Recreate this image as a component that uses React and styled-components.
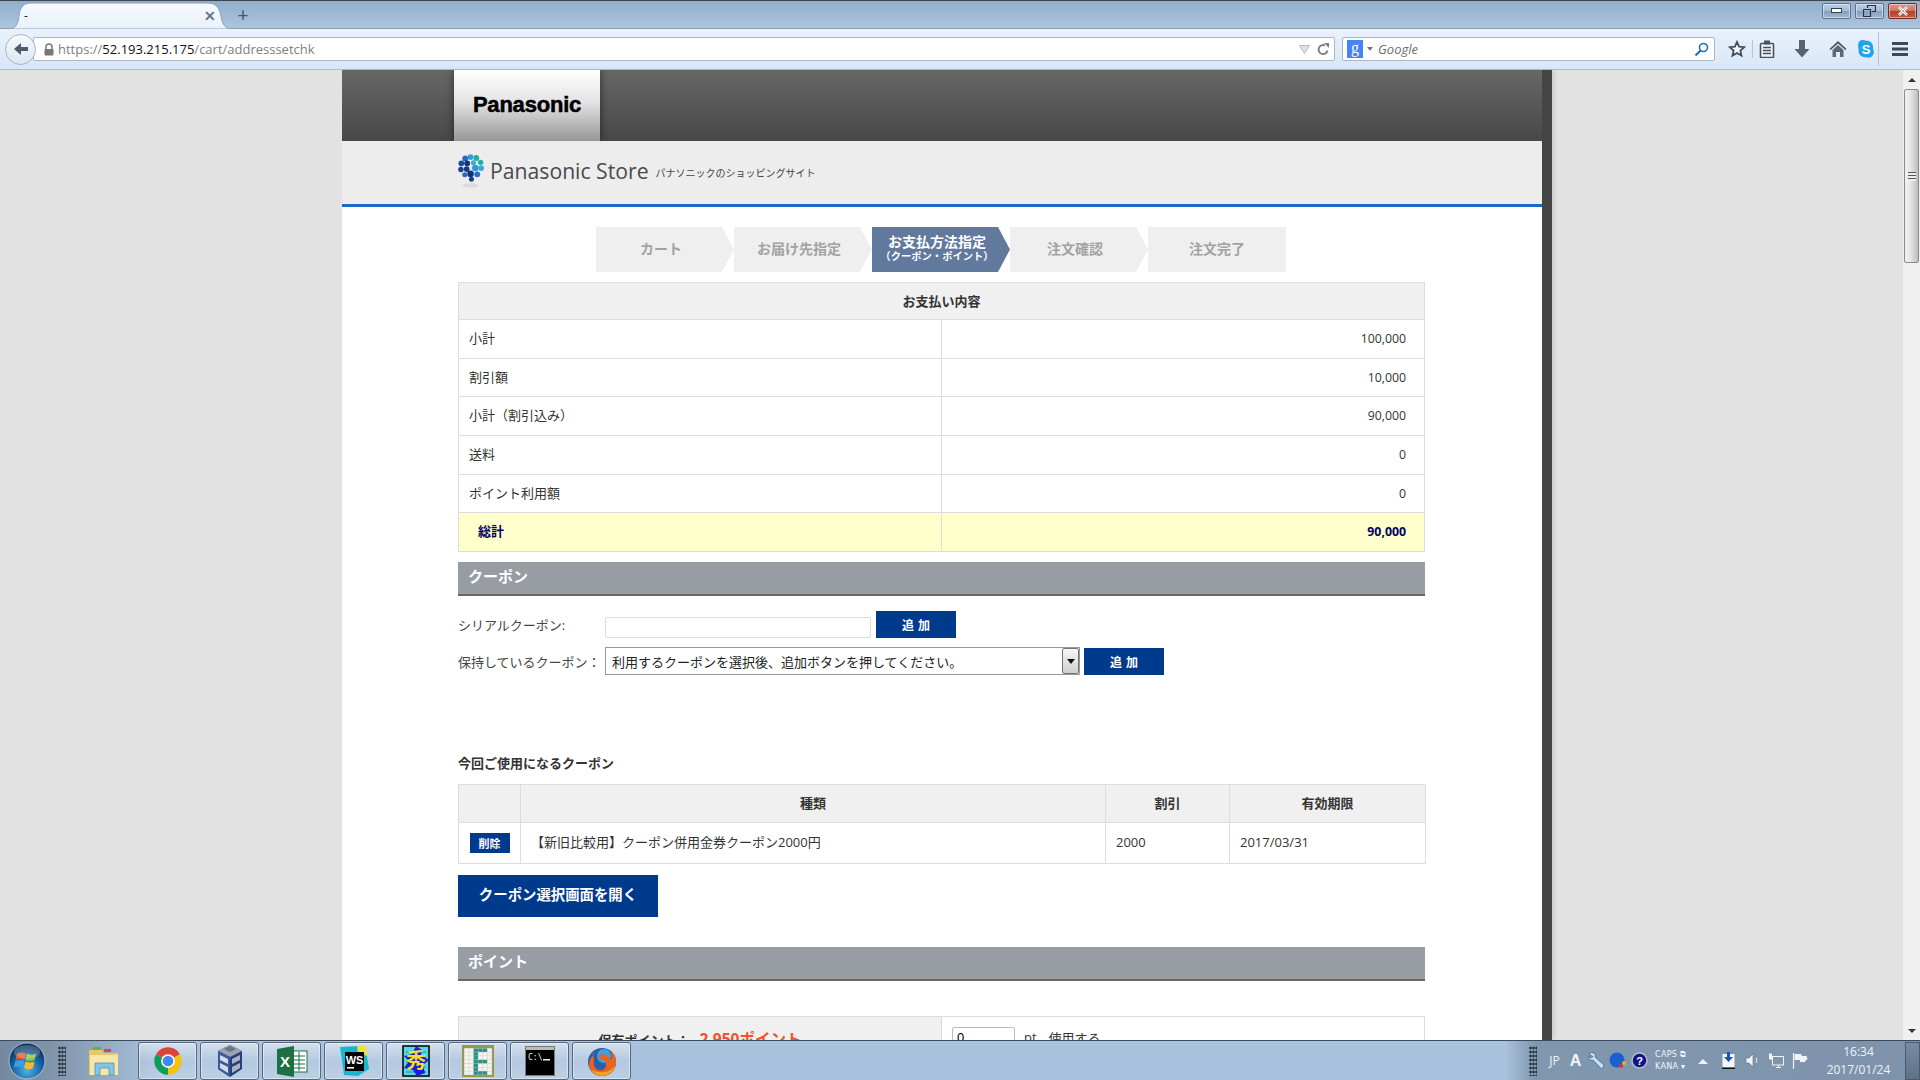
import React from 'react';
import styled, { createGlobalStyle } from 'styled-components';

const JP = `"Open Sans", "Noto Sans CJK JP", sans-serif`;

const GlobalStyle = createGlobalStyle`
  html, body {
    margin: 0;
    padding: 0;
    height: 100%;
    overflow: hidden;
    background: #e2e2e2;
    font-family: ${JP};
  }
  * {
    box-sizing: border-box;
  }
`;

const Screen = styled.div`
  width: 1920px;
  height: 1080px;
  display: flex;
  flex-direction: column;
  overflow: hidden;
`;

/* ---------- browser chrome ---------- */

const TitleBar = styled.div`
  height: 29px;
  display: flex;
  align-items: flex-end;
  padding-left: 8px;
  border-top: 1px solid #3c4450;
  border-bottom: 1px solid #8a9bb0;
  background: linear-gradient(#93aecb, #abc5df);
`;

const Tab = styled.div`
  position: relative;
  width: 225px;
  height: 27px;
  margin-bottom: -1px;
  display: flex;
  align-items: center;
  justify-content: space-between;
  padding: 0 17px 0 16px;
  font-size: 12px;
  color: #222;
`;

const TabShape = styled.svg`
  position: absolute;
  left: 0;
  top: 0;
`;

const TabLabel = styled.span`
  position: relative;
`;

const TabClose = styled.span`
  position: relative;
  font-size: 14px;
  font-weight: 700;
  color: #6b7480;
`;

const NewTab = styled.div`
  margin: 0 0 2px 0;
  width: 20px;
  text-align: center;
  font-size: 20px;
  line-height: 22px;
  color: #46566a;
`;

const WindowButtons = styled.div`
  margin-left: auto;
  margin-right: 3px;
  align-self: flex-start;
  margin-top: 2px;
  display: flex;
  gap: 4px;
`;

const WindowButton = styled.div`
  width: 29px;
  height: 16px;
  border: 1px solid ${p => (p.$close ? '#6f2a2a' : '#5f7288')};
  border-radius: 2px;
  display: flex;
  align-items: center;
  justify-content: center;
  box-shadow: inset 0 0 0 1px rgba(255, 255, 255, 0.45);
  background: ${p =>
    p.$close
      ? 'linear-gradient(#dc9a8a 0%, #cf7460 48%, #b5422c 52%, #c65a42 100%)'
      : 'linear-gradient(#b9cde2 0%, #a5bcd6 48%, #86a0bf 52%, #9fb7d2 100%)'};
`;

const Toolbar = styled.div`
  height: 41px;
  display: flex;
  align-items: center;
  padding-left: 5px;
  border-bottom: 1px solid #aebcd0;
  background: linear-gradient(#e9f1fb, #d9e7f8);
`;

const BackButton = styled.div`
  position: relative;
  z-index: 1;
  width: 31px;
  height: 31px;
  flex: none;
  border-radius: 50%;
  border: 1px solid #a8b5c6;
  background: linear-gradient(#f7fafd, #dbe6f2);
  display: flex;
  align-items: center;
  justify-content: center;
`;

const Field = styled.div`
  height: 24px;
  background: #fff;
  border: 1px solid #aab7c9;
  border-radius: 2px;
  display: flex;
  align-items: center;
`;

const UrlBar = styled(Field)`
  width: 1302px;
  margin-left: -3px;
  padding: 0 4px 0 10px;
  gap: 4px;
  font-size: 13px;
  color: #808080;
`;

const UrlHost = styled.span`
  color: #111;
`;

const UrlActions = styled.div`
  margin-left: auto;
  display: flex;
  align-items: center;
  gap: 7px;
`;

const SearchBar = styled(Field)`
  width: 373px;
  margin-left: 7px;
  padding: 0 5px 0 4px;
  gap: 4px;
  font-size: 13px;
  font-style: italic;
  color: #6d6d6d;
`;

const GoogleBadge = styled.span`
  width: 16px;
  height: 18px;
  background: #4285f4;
  color: #fff;
  font: 16px/16px 'Liberation Serif', serif;
  text-align: center;
`;

const SearchCaret = styled.span`
  width: 0;
  height: 0;
  border: 3px solid transparent;
  border-top: 4px solid #777;
  border-bottom: 0;
`;

const SearchText = styled.span`
  flex: 1;
  margin-left: 1px;
`;

const ToolIcon = styled.div`
  width: 24px;
  height: 24px;
  flex: none;
  margin-left: ${p => p.$gap || 0}px;
  display: flex;
  align-items: center;
  justify-content: center;
`;

const ToolDivider = styled.div`
  width: 1px;
  height: ${p => p.$h}px;
  margin-left: ${p => p.$gap}px;
  background: #b6c4d6;
`;

/* ---------- page ---------- */

const Viewport = styled.div`
  flex: 1;
  min-height: 0;
  display: flex;
  padding-left: 342px;
  background: #e2e2e2;
`;

const Page = styled.div`
  width: 1210px;
  flex: none;
  overflow: hidden;
  background: #fff;
  border-right: 10px solid #444;
  box-shadow: 3px 0 3px rgba(0, 0, 0, 0.08);
  font-size: 13px;
  color: #333;
`;

const TopBand = styled.div`
  height: 71px;
  padding-left: 112px;
  background: linear-gradient(#676767, #484848);
`;

const LogoTab = styled.div`
  width: 146px;
  height: 71px;
  padding-bottom: 2px;
  display: flex;
  align-items: center;
  justify-content: center;
  background: linear-gradient(#fff 0%, #e4e4e4 45%, #979797 100%);
  box-shadow: 0 0 8px rgba(0, 0, 0, 0.55);
  font: 700 22px 'Liberation Sans', sans-serif;
  letter-spacing: -0.2px;
  -webkit-text-stroke: 0.5px #000;
  color: #000;
`;

const StoreBand = styled.div`
  height: 66px;
  padding: 0 0 4px 116px;
  display: flex;
  align-items: center;
  background: #ededed;
  border-bottom: 3px solid #1a6bc9;
`;

const StoreName = styled.div`
  margin-left: 6px;
  font-size: 21.2px;
  color: #4a4a4a;
`;

const StoreTag = styled.div`
  margin: 4px 0 0 7px;
  font-size: 10px;
  color: #444;
`;

const Steps = styled.ol`
  list-style: none;
  margin: 20px 0 10px 254px;
  padding: 0;
  height: 45px;
  display: flex;
`;

const Step = styled.li`
  width: 138px;
  height: 45px;
  padding: 0 ${p => (p.$last ? 0 : 8)}px 3px 0;
  display: flex;
  flex-direction: column;
  align-items: center;
  justify-content: center;
  font-weight: 700;
  font-size: 14px;
  line-height: 15px;
  color: ${p => (p.$active ? '#fff' : '#a2a2a2')};
  background: ${p => (p.$active ? '#62799e' : '#efefef')};
  clip-path: ${p =>
    p.$last
      ? 'none'
      : 'polygon(0 0, 126px 0, 100% 50%, 126px 100%, 0 100%)'};
`;

const StepNote = styled.span`
  margin-top: 2px;
  font-size: 10.3px;
  line-height: 11px;
`;

const Content = styled.div`
  width: 967px;
  margin-left: 116px;
`;

const Table = styled.table`
  width: 100%;
  table-layout: fixed;
  border-collapse: collapse;
`;

const Th = styled.th`
  height: ${p => p.$h || 38}px;
  background: #f0f0f0;
  border: 1px solid #ddd;
  font-size: 13px;
  font-weight: 700;
  color: #333;
  text-align: center;
  padding: 0 0 2px;
`;

const Td = styled.td`
  height: ${p => p.$h || 38.7}px;
  border: 1px solid #ddd;
  padding: 0 ${p => p.$pad ?? 10}px 3px;
  font-size: 13px;
  color: #333;
  text-align: left;
`;

const DeleteCell = styled(Td)`
  padding: 0;
`;

const AmountCell = styled(Td)`
  padding: 0 18px 1px 0;
  font-size: 12.3px;
  text-align: right;
`;

const TotalLabel = styled(Td)`
  padding-left: 19px;
  background: #ffffcc;
  font-weight: 700;
  color: #000060;
`;

const TotalAmount = styled(AmountCell)`
  background: #ffffcc;
  font-weight: 700;
  color: #000060;
`;

const SectionBar = styled.h2`
  margin: ${p => p.$top}px 0 0;
  height: 34px;
  padding: 0 0 5px 10px;
  display: flex;
  align-items: center;
  background: #979da3;
  border-bottom: 2px solid #6e675e;
  font-size: 15px;
  font-weight: 700;
  color: #fff;
`;

const FormRow = styled.div`
  display: flex;
  align-items: flex-end;
  margin-top: ${p => p.$top}px;
`;

const FormLabel = styled.div`
  width: 147px;
  align-self: center;
  font-size: 13px;
  color: #444;
  white-space: nowrap;
`;

const TextInput = styled.input`
  width: 266px;
  height: 21px;
  padding: 0 4px;
  border: 1px solid #ddd;
  border-radius: 2px;
  background: #fff;
`;

const AddButton = styled.button`
  width: 80px;
  height: 27px;
  margin-left: ${p => p.$gap}px;
  border: 0;
  padding: 0 0 0 4px;
  background: #003a8c;
  color: #fff;
  font-family: ${JP};
  font-size: 12px;
  font-weight: 700;
  letter-spacing: 4px;
`;

const SelectBox = styled.div`
  width: 475px;
  height: 28px;
  display: flex;
  align-items: center;
  padding-left: 6px;
  border: 1px solid #999;
  font-size: 13px;
  color: #222;
`;

const SelectArrow = styled.span`
  margin-left: auto;
  width: 17px;
  height: 26px;
  display: flex;
  align-items: center;
  justify-content: center;
  border: 1px solid #777;
  border-radius: 2px;
  background: linear-gradient(#f6f6f6, #cfcfcf);

  &::after {
    content: '';
    border: 4px solid transparent;
    border-top: 5px solid #111;
    border-bottom: 0;
  }
`;

const SubHeading = styled.h3`
  margin: 80px 0 13px;
  height: 16px;
  font-size: 13px;
  line-height: 16px;
  font-weight: 700;
  color: #333;
`;

const DeleteButton = styled.button`
  display: block;
  width: 40px;
  height: 20px;
  margin: 0 auto;
  padding: 0;
  border: 0;
  background: #003a8c;
  color: #fff;
  font-family: ${JP};
  font-size: 11px;
  font-weight: 700;
`;

const OpenButton = styled.button`
  display: block;
  width: 200px;
  height: 42px;
  margin-top: 11px;
  padding: 0 0 5px;
  border: 0;
  background: #003a8c;
  color: #fff;
  font-family: ${JP};
  font-size: 14.4px;
  font-weight: 700;
`;

const PointTable = styled(Table)`
  margin-top: 35px;
`;

const PointLabel = styled.td`
  height: 44px;
  width: 483px;
  background: #f0f0f0;
  border: 1px solid #ddd;
  text-align: center;
  font-size: 13px;
  font-weight: 700;
`;

const PointValue = styled.span`
  margin-left: 10px;
  font-size: 15.5px;
  color: #f5502a;
`;

const PointUse = styled.td`
  border: 1px solid #ddd;
  padding: 10px 10px 0;
  vertical-align: top;
  font-size: 13px;
`;

const PointField = styled.div`
  display: flex;
  align-items: center;
  gap: 9px;
`;

const PointInput = styled.input`
  width: 63px;
  height: 20px;
  padding: 0 4px;
  border: 1px solid #bbb;
  border-radius: 2px;
  font-size: 13px;
`;

const PointUnit = styled.span`
  margin-right: 3px;
`;

/* ---------- scrollbar ---------- */

const ScrollBar = styled.div`
  width: 17px;
  margin-left: auto;
  flex: none;
  display: flex;
  flex-direction: column;
  align-items: center;
  background: #f0f0f0;
`;

const ScrollArrow = styled.div`
  height: 19px;
  flex: none;
  display: flex;
  align-items: center;
  justify-content: center;

  &::after {
    content: '';
    border: 4px solid transparent;
    ${p =>
      p.$down
        ? 'border-top: 4px solid #333; border-bottom: 0;'
        : 'border-bottom: 4px solid #333; border-top: 0;'}
  }
`;

const ScrollThumb = styled.div`
  width: 15px;
  height: 174px;
  display: flex;
  align-items: center;
  justify-content: center;
  border: 1px solid #8a8a8a;
  border-radius: 2px;
  background: linear-gradient(90deg, #f2f2f2, #e4e4e4 45%, #bdbdbd);
`;

const ScrollGrip = styled.div`
  width: 8px;
  height: 9px;
  background: repeating-linear-gradient(#555 0 1px, #eee 1px 3px);
`;

const ScrollTrack = styled.div`
  flex: 1;
`;

/* ---------- taskbar ---------- */

const Taskbar = styled.div`
  height: 40px;
  flex: none;
  display: flex;
  align-items: center;
  border-top: 1px solid #3b4a5c;
  background: linear-gradient(
    90deg,
    #74899f 0,
    #7f93aa 50px,
    #a9c2dd 160px,
    #a9c2dd 1505px,
    #8097ae 1535px,
    #7e93ab 100%
  );
`;

const StartOrb = styled.div`
  width: 54px;
  display: flex;
  justify-content: center;
`;

const Grip = styled.div`
  width: 8px;
  height: 30px;
  flex: none;
  margin: ${p => p.$margin};
  background-image: radial-gradient(#26303c 1px, transparent 1.2px);
  background-size: 3px 4px;
`;

const PinnedSlot = styled.div`
  width: 72px;
  padding-left: 4px;
  display: flex;
  justify-content: center;
`;

const TaskButtons = styled.div`
  display: flex;
  gap: 3px;
`;

const TaskButton = styled.div`
  width: 59px;
  height: 38px;
  display: flex;
  align-items: center;
  justify-content: center;
  border: 1px solid #56677c;
  border-radius: 3px;
  background: linear-gradient(rgba(255, 255, 255, 0.5), rgba(255, 255, 255, 0.12) 50%, rgba(255, 255, 255, 0.22));
  box-shadow: inset 0 0 0 1px rgba(255, 255, 255, 0.45);
`;

const Tray = styled.div`
  margin-left: auto;
  display: flex;
  align-items: center;
  color: #f2f5f9;
`;

const TraySlot = styled.div`
  width: ${p => p.$w}px;
  flex: none;
  display: flex;
  justify-content: center;
  font-size: 12px;
`;

const ImeLetter = styled.span`
  font: 700 16px/18px 'Liberation Sans', sans-serif;
`;

const ImeBlock = styled.div`
  width: 39px;
  flex: none;
  padding-left: 4px;
  font: 8px/12px 'DejaVu Sans', sans-serif;
  letter-spacing: 0.3px;
`;

const Clock = styled.div`
  width: 93px;
  text-align: center;
  font-size: 12px;
  line-height: 18px;
  color: #eef2f7;
`;

const ShowDesktop = styled.div`
  width: 15px;
  height: 38px;
  border: 1px solid #4c5b6c;
  background: linear-gradient(#778ba1, #5e7186);
`;

/* ---------- drawings ---------- */

const BackIcon = () => (
  <svg width="16" height="16" viewBox="0 0 16 16">
    <path d="M1 8l7-6v4h7v4H8v4z" fill="#4d5b6b" />
  </svg>
);

const LockIcon = () => (
  <svg width="10" height="13" viewBox="0 0 10 13">
    <path d="M2 6V4a3 3 0 0 1 6 0v2" fill="none" stroke="#777" strokeWidth="1.5" />
    <rect x="0.5" y="6" width="9" height="6.5" rx="1" fill="#777" />
  </svg>
);

const ReloadIcon = () => (
  <svg width="13" height="13" viewBox="0 0 13 13">
    <path d="M10.5 7.5A4.5 4.5 0 1 1 8 2.5" fill="none" stroke="#7a838e" strokeWidth="2" />
    <path d="M7 0h5v5z" fill="#7a838e" />
  </svg>
);

const DropIcon = () => (
  <svg width="11" height="9" viewBox="0 0 11 9">
    <path d="M0.5 0.5h10L5.5 8.5z" fill="#dfe3e8" stroke="#b5bbc3" />
  </svg>
);

const SearchIcon = () => (
  <svg width="15" height="15" viewBox="0 0 15 15">
    <circle cx="9.5" cy="5.5" r="4" fill="none" stroke="#2a6db0" strokeWidth="1.6" />
    <path d="M6.5 8.5L1.5 13.5" stroke="#2a6db0" strokeWidth="2.2" />
  </svg>
);

const StarIcon = () => (
  <svg width="18" height="18" viewBox="0 0 18 18">
    <path d="M9 2l2.1 4.7 5.1.5-3.8 3.4 1.1 5L9 13l-4.500 2.600 1.100-5L1.800 7.200l5.100-.5z" fill="#f4f8fc" stroke="#414d5a" strokeWidth="1.800" />
  </svg>
);

const ClipboardIcon = () => (
  <svg width="16" height="18" viewBox="0 0 16 18">
    <rect x="1.500" y="3.500" width="13" height="14" rx="1" fill="#eef4fb" stroke="#46535f" strokeWidth="1.600" />
    <rect x="5" y="0.500" width="6" height="4" fill="#46535f" />
    <path d="M4 7.500h8M4 10.500h8M4 13.500h8" stroke="#46535f" strokeWidth="1.600" />
  </svg>
);

const DownloadIcon = () => (
  <svg width="16" height="18" viewBox="0 0 16 18">
    <path d="M5 0h6v9h4.500L8 17.500.5 9H5z" fill="#57636f" />
  </svg>
);

const HomeIcon = () => (
  <svg width="18" height="18" viewBox="0 0 18 18">
    <path d="M9 1L.5 9l1.200 1L9 3.500l7.300 6.500 1.200-1z" fill="#46535f" />
    <path d="M3.500 10L9 5l5.500 5v7h-3.500v-5H7v5H3.500z" fill="#5c6875" />
  </svg>
);

const SkypeIcon = () => (
  <svg width="18" height="20" viewBox="0 0 18 20">
    <path d="M5 1c2 0 3 .5 4 .8C13 1.500 16 4 16 8c0 1 0 1.500.5 3 .5 2 .5 3.500-.5 5-1 1.800-3 3-5.500 2.600C9 18.300 8 18.300 6.500 18 3.500 17.500 1.500 15 1.500 12c0-1 .2-2-.2-3.500C.5 5 2 1 5 1z" fill="#1fa5ea" />
    <text x="9" y="15" textAnchor="middle" fontFamily="Liberation Sans" fontWeight="700" fontSize="13" fill="#fff">S</text>
  </svg>
);

const MenuIcon = () => (
  <svg width="18" height="16" viewBox="0 0 18 16">
    <path d="M1 2.500h16M1 8h16M1 13.500h16" stroke="#3d4955" strokeWidth="3" />
  </svg>
);

const RestoreGlyph = () => (
  <svg width="13" height="12" viewBox="0 0 13 12">
    <path d="M4.500 3V.5h8v6H9M.5 4.500h7v7h-7z" fill="none" stroke="#25303c" strokeWidth="1.200" />
  </svg>
);

const MinGlyph = () => (
  <svg width="11" height="6" viewBox="0 0 11 6">
    <rect x="0.500" y="0.500" width="10" height="4" fill="#fff" stroke="#33404f" />
  </svg>
);

const CloseGlyph = () => (
  <svg width="12" height="10" viewBox="0 0 12 10">
    <path d="M2 1l8 8M10 1L2 9" stroke="#fff" strokeWidth="2.600" />
    <path d="M2 1l8 8M10 1L2 9" stroke="#5a2a22" strokeWidth="0.400" />
  </svg>
);

const storeDots = [
  [13, 3.500, 3, '#2f9fd6'], [19, 4.500, 3, '#1fae9f'], [7.500, 5, 3, '#2a68b8'],
  [23.500, 9, 2.800, '#1bb5a5'], [3.500, 10, 3, '#1b4a9c'], [9.500, 10, 3, '#12327f'],
  [16, 9.500, 2.600, '#39a9df'], [24, 15, 3, '#3aa9e0'], [18, 15, 3.400, '#2b9ad6'],
  [9, 16, 3, '#163a8c'], [3, 16.500, 2.800, '#1b3e93'], [13, 21, 3.400, '#12327f'],
  [20, 21.500, 3, '#2b6fc0'], [14, 26.500, 2.600, '#14408f'], [7, 22, 2.600, '#2a68b8'],
];

const StoreLogo = () => (
  <svg width="26" height="36" viewBox="0 0 27 36">
    {storeDots.map(([cx, cy, r, fill]) => (
      <circle key={`${cx}-${cy}`} cx={cx} cy={cy} r={r} fill={fill} />
    ))}
    <ellipse cx="13" cy="33" rx="8" ry="2.500" fill="#dcdcdc" />
  </svg>
);

const WindowsOrb = () => (
  <svg width="38" height="38" viewBox="0 0 38 38">
    <defs>
      <radialGradient id="orb" cx="50%" cy="75%" r="70%">
        <stop offset="0" stopColor="#4fb4e8" />
        <stop offset="0.6" stopColor="#15609f" />
        <stop offset="1" stopColor="#0b2d52" />
      </radialGradient>
    </defs>
    <circle cx="19" cy="19" r="18" fill="url(#orb)" stroke="#cfe0ee" strokeOpacity="0.7" />
    <path d="M9 12c3-2 6-2 9-.5l-1.500 6.500c-3-1.300-6-1.300-9 0z" fill="#e8562c" />
    <path d="M19 11.500c3 1.500 6 1.500 9 .3l-1.500 6.500c-3 1-6 1-9-.3z" fill="#8cc63f" />
    <path d="M7.300 19c3-1.300 6-1.300 9 0l-1.500 6.500c-3-1.300-6-1.300-9 0z" fill="#3aa0e4" />
    <path d="M17.500 19.500c3 1.300 6 1.300 9 .2L25 26.300c-3 1.200-6 1.200-9-.2z" fill="#f5b82e" />
    <ellipse cx="19" cy="10" rx="13" ry="7" fill="#fff" opacity="0.22" />
  </svg>
);

const ExplorerIcon = () => (
  <svg width="34" height="34" viewBox="0 0 34 34">
    <path d="M2 6h13l2 3h14v22H2z" fill="#e8c66c" />
    <rect x="6" y="3" width="8" height="3" fill="#59b35a" />
    <rect x="17" y="5" width="7" height="3" fill="#d94a3a" />
    <path d="M3 11h28v20H3z" fill="#f8e6a6" />
    <path d="M8 31V19h19v12h-5v-7H13v7z" fill="#7fc6e8" stroke="#4e93bd" strokeWidth="0.800" />
  </svg>
);

const ChromeIcon = () => (
  <svg width="30" height="30" viewBox="0 0 48 48">
    <path d="M24 24L4.950 13A22 22 0 0 1 43.050 13Z" fill="#db4437" />
    <path d="M24 24L43.050 13A22 22 0 0 1 24 46Z" fill="#f4c20d" />
    <path d="M24 24L24 46A22 22 0 0 1 4.950 13Z" fill="#0f9d58" />
    <circle cx="24" cy="24" r="11" fill="#fff" />
    <circle cx="24" cy="24" r="8.500" fill="#4285f4" />
  </svg>
);

const VboxIcon = () => (
  <svg width="30" height="34" viewBox="0 0 30 34">
    <path d="M15 1l12 6v18l-12 8-12-8V7z" fill="#27407c" />
    <path d="M15 1l12 6-12 6L3 7z" fill="#9aa3b0" />
    <path d="M9 5l6-3 6 3-6 3z" fill="#68748a" />
    <path d="M3 7l12 6v20L3 25z" fill="#3a5a9c" />
    <path d="M5 11l8 4v5l-8-4zM5 19l8 4v6l-8-5z" fill="#d5dbe4" />
    <path d="M17 15l8-4v5l-8 4zM17 23l8-4v5l-8 5z" fill="#aab4c4" />
  </svg>
);

const ExcelIcon = () => (
  <svg width="32" height="32" viewBox="0 0 32 32">
    <rect x="14" y="6" width="17" height="21" fill="#fff" stroke="#1d7044" />
    <path d="M18 11h11M18 15h11M18 19h11M18 23h11M23 7v19" stroke="#1d7044" />
    <path d="M1 4l17-3v31L1 29z" fill="#1d7044" />
    <text x="9" y="22" textAnchor="middle" fontFamily="Liberation Sans" fontWeight="700" fontSize="15" fill="#fff">X</text>
  </svg>
);

const WebStormIcon = () => (
  <svg width="32" height="32" viewBox="0 0 32 32">
    <path d="M2 2l19-1 5 6-8 3z" fill="#13b5d6" />
    <path d="M19 1h9l2 16-10-8z" fill="#e8e23b" />
    <path d="M2 2l4 28 14 1 11-7-2-13z" fill="#17b8cf" />
    <rect x="7" y="7" width="19" height="19" fill="#000" />
    <text x="16.500" y="19" textAnchor="middle" fontFamily="Liberation Sans" fontWeight="700" fontSize="11" fill="#fff">WS</text>
    <rect x="9" y="22" width="7" height="1.600" fill="#fff" />
  </svg>
);

const HidemaruIcon = () => (
  <svg width="28" height="32" viewBox="0 0 28 32">
    <rect x="1" y="1" width="26" height="30" fill="#54d8e6" stroke="#000" strokeWidth="1.500" />
    <path d="M4 7h20M4 12h20M4 17h20M4 22h20M4 27h20" stroke="#2b8a9a" />
    <path d="M14 1l6 4-1 5 8 5-6 5 2 8-8 3-4-6-9-2 5-7-5-5 8-2z" fill="#1a1ae0" />
    <text x="14" y="23" textAnchor="middle" fontFamily="Noto Sans CJK JP" fontWeight="700" fontSize="20" fill="#f5e020">秀</text>
  </svg>
);

const sheetCols = [0, 1, 2, 3, 4, 5];
const sheetRows = [0, 1, 2, 3, 4, 5, 6];
const sheetTeal = (r, c) => c === 2 || (c >= 2 && c <= 4 && r % 3 === 0);

const SheetIcon = () => (
  <svg width="32" height="32" viewBox="0 0 32 32">
    <rect width="32" height="32" fill="#98984e" />
    <rect x="2" y="3" width="28" height="27" fill="#c8c8b8" />
    {sheetRows.map(r =>
      sheetCols.map(c => (
        <rect
          key={`${r}-${c}`}
          x={2.500 + c * 4.600}
          y={3.500 + r * 3.800}
          width="4.200"
          height="3.400"
          fill={sheetTeal(r, c) ? '#2e8f88' : '#f4f4ee'}
        />
      )),
    )}
  </svg>
);

const ConsoleIcon = () => (
  <svg width="30" height="30" viewBox="0 0 30 30">
    <rect x="0.500" y="0.500" width="29" height="29" fill="#000" stroke="#777" />
    <rect x="1" y="1" width="28" height="3" fill="#bbb" />
    <text x="3" y="14" fontFamily="DejaVu Sans Mono" fontSize="8" fill="#eee">C:\</text>
    <rect x="18" y="13" width="7" height="1.500" fill="#eee" />
  </svg>
);

const FirefoxIcon = () => (
  <svg width="32" height="32" viewBox="0 0 32 32">
    <circle cx="16" cy="17" r="14" fill="#2a5ea8" />
    <circle cx="18" cy="11" r="7" fill="#3fa0df" />
    <path d="M8 2c-1 3-1 5 0 7-3 3-5 7-5 11 1 7 7 11 13 11 8 0 14-6 14-14 0-5-2-9-6-12 2 4 2 7 1 10-2-4-5-6-9-6-3 0-3 3-2 5 3 0 6 2 6 6 0 4-4 6-7 5-4-1-6-5-5-9 0-4-2-9 0-14z" fill="#e8631f" />
    <path d="M5 24c3 6 10 8 16 6 4-2 7-5 8-9-4 5-10 7-15 6-4 0-7-1-9-3z" fill="#f6a31f" />
  </svg>
);

const WrenchIcon = () => (
  <svg width="17" height="17" viewBox="0 0 17 17">
    <path d="M1 2.500L3.500.5 7 1.500l.5 4L16 13l-1 3-2 .5-7.500-8-4-.5L.5 4.500 3.500 6 5 4.500z" fill="#c6e0f7" stroke="#3f6a92" strokeWidth="0.800" />
  </svg>
);

const BallIcon = () => (
  <svg width="18" height="18" viewBox="0 0 18 18">
    <circle cx="8" cy="8" r="7.500" fill="#1a5fd0" />
    <circle cx="15" cy="11" r="2" fill="#e8b020" />
    <circle cx="12" cy="14" r="2" fill="#d83a2a" />
  </svg>
);

const HelpIcon = () => (
  <svg width="17" height="17" viewBox="0 0 17 17">
    <circle cx="8.500" cy="8.500" r="7.500" fill="#12128a" stroke="#b8bcc6" strokeWidth="1.500" />
    <text x="8.500" y="12.500" textAnchor="middle" fontFamily="Liberation Sans" fontWeight="700" fontSize="11" fill="#fff">?</text>
  </svg>
);

const UpArrowIcon = () => (
  <svg width="10" height="6" viewBox="0 0 10 6">
    <path d="M0 6l5-5 5 5z" fill="#eef2f7" />
  </svg>
);

const SafeRemoveIcon = () => (
  <svg width="13" height="17" viewBox="0 0 13 17">
    <rect x="0.500" y="2" width="12" height="13.500" fill="#f5f5f5" />
    <path d="M5 0h3v5h3l-4.500 5L2 5h3z" fill="#1452c8" />
    <rect y="15.500" width="13" height="1.500" fill="#111" />
  </svg>
);

const SpeakerIcon = () => (
  <svg width="14" height="15" viewBox="0 0 14 15">
    <path d="M1 5h3l4-4v13l-4-4H1z" fill="#f0f3f7" stroke="#5a6d80" strokeWidth="0.600" />
    <path d="M11 5c1 1.500 1 3.500 0 5" fill="none" stroke="#f0f3f7" />
  </svg>
);

const NetworkIcon = () => (
  <svg width="16" height="16" viewBox="0 0 16 16">
    <rect x="4.500" y="3.500" width="11" height="8.500" fill="none" stroke="#f0f3f7" />
    <path d="M8 14.500h5M10.500 12v2.500" stroke="#f0f3f7" />
    <rect x="1" y="0.500" width="3" height="6" fill="#f0f3f7" />
  </svg>
);

const FlagIcon = () => (
  <svg width="16" height="16" viewBox="0 0 16 16">
    <path d="M1.500 0v16" stroke="#f0f3f7" strokeWidth="1.200" />
    <path d="M2.500 1h7v2h5l1 3-3 3H8V7H2.500z" fill="#f0f3f7" />
  </svg>
);

/* ---------- data ---------- */

const steps = ['カート', 'お届け先指定', 'お支払方法指定', '注文確認', '注文完了'];

const summary = [
  ['小計', '100,000'],
  ['割引額', '10,000'],
  ['小計（割引込み）', '90,000'],
  ['送料', '0'],
  ['ポイント利用額', '0'],
];

const taskIcons = [
  ChromeIcon,
  VboxIcon,
  ExcelIcon,
  WebStormIcon,
  HidemaruIcon,
  SheetIcon,
  ConsoleIcon,
  FirefoxIcon,
];

function BrowserChrome() {
  return (
    <>
      <TitleBar>
        <Tab>
          <TabShape width="225" height="27" viewBox="0 0 225 27">
            <defs>
              <linearGradient id="tab" x1="0" y1="0" x2="0" y2="1">
                <stop offset="0" stopColor="#f6fafe" />
                <stop offset="1" stopColor="#e8f1fb" />
              </linearGradient>
            </defs>
            <path
              d="M0 27C8 27 10 22 11 14 12 5 15 1 24 1H199C208 1 211 5 213 14 214 22 217 27 225 27Z"
              fill="url(#tab)"
              stroke="#8e9eb3"
            />
          </TabShape>
          <TabLabel>-</TabLabel>
          <TabClose>✕</TabClose>
        </Tab>
        <NewTab>+</NewTab>
        <WindowButtons>
          <WindowButton><MinGlyph /></WindowButton>
          <WindowButton><RestoreGlyph /></WindowButton>
          <WindowButton $close><CloseGlyph /></WindowButton>
        </WindowButtons>
      </TitleBar>
      <Toolbar>
        <BackButton><BackIcon /></BackButton>
        <UrlBar>
          <LockIcon />
          <span>
            https://<UrlHost>52.193.215.175</UrlHost>/cart/addresssetchk
          </span>
          <UrlActions>
            <DropIcon />
            <ReloadIcon />
          </UrlActions>
        </UrlBar>
        <SearchBar>
          <GoogleBadge>g</GoogleBadge>
          <SearchCaret />
          <SearchText>Google</SearchText>
          <SearchIcon />
        </SearchBar>
        <ToolIcon $gap={10}><StarIcon /></ToolIcon>
        <ToolDivider $gap={3} $h={18} />
        <ToolIcon $gap={2}><ClipboardIcon /></ToolIcon>
        <ToolIcon $gap={11}><DownloadIcon /></ToolIcon>
        <ToolIcon $gap={12}><HomeIcon /></ToolIcon>
        <ToolIcon $gap={4}><SkypeIcon /></ToolIcon>
        <ToolDivider $gap={0} $h={34} />
        <ToolIcon $gap={9}><MenuIcon /></ToolIcon>
      </Toolbar>
    </>
  );
}

function Checkout() {
  return (
    <Page>
      <TopBand>
        <LogoTab>Panasonic</LogoTab>
      </TopBand>
      <StoreBand>
        <StoreLogo />
        <StoreName>Panasonic Store</StoreName>
        <StoreTag>パナソニックのショッピングサイト</StoreTag>
      </StoreBand>
      <Steps>
        {steps.map((label, i) => (
          <Step key={label} $active={i === 2} $last={i === steps.length - 1}>
            {label}
            {i === 2 && <StepNote>（クーポン・ポイント）</StepNote>}
          </Step>
        ))}
      </Steps>
      <Content>
        <Table>
          <thead>
            <tr>
              <Th colSpan={2} $h={37}>お支払い内容</Th>
            </tr>
          </thead>
          <tbody>
            {summary.map(([label, value]) => (
              <tr key={label}>
                <Td>{label}</Td>
                <AmountCell>{value}</AmountCell>
              </tr>
            ))}
            <tr>
              <TotalLabel>総計</TotalLabel>
              <TotalAmount>90,000</TotalAmount>
            </tr>
          </tbody>
        </Table>

        <SectionBar $top={10}>クーポン</SectionBar>
        <FormRow $top={15}>
          <FormLabel>シリアルクーポン:</FormLabel>
          <TextInput />
          <AddButton $gap={5}>追加</AddButton>
        </FormRow>
        <FormRow $top={9}>
          <FormLabel>保持しているクーポン：</FormLabel>
          <SelectBox>
            利用するクーポンを選択後、追加ボタンを押してください。
            <SelectArrow />
          </SelectBox>
          <AddButton $gap={4}>追加</AddButton>
        </FormRow>

        <SubHeading>今回ご使用になるクーポン</SubHeading>
        <Table>
          <colgroup>
            <col style={{ width: 62 }} />
            <col style={{ width: 585 }} />
            <col style={{ width: 124 }} />
            <col style={{ width: 196 }} />
          </colgroup>
          <thead>
            <tr>
              <Th />
              <Th>種類</Th>
              <Th>割引</Th>
              <Th>有効期限</Th>
            </tr>
          </thead>
          <tbody>
            <tr>
              <DeleteCell $h={41}><DeleteButton>削除</DeleteButton></DeleteCell>
              <Td $h={41}>【新旧比較用】クーポン併用金券クーポン2000円</Td>
              <Td $h={41}>2000</Td>
              <Td $h={41}>2017/03/31</Td>
            </tr>
          </tbody>
        </Table>
        <OpenButton>クーポン選択画面を開く</OpenButton>

        <SectionBar $top={30}>ポイント</SectionBar>
        <PointTable>
          <tbody>
            <tr>
              <PointLabel>
                保有ポイント：<PointValue>2,950ポイント</PointValue>
              </PointLabel>
              <PointUse>
                <PointField>
                  <PointInput defaultValue="0" />
                  <PointUnit>pt</PointUnit>
                  使用する
                </PointField>
              </PointUse>
            </tr>
          </tbody>
        </PointTable>
      </Content>
    </Page>
  );
}

function WindowsTaskbar() {
  return (
    <Taskbar>
      <StartOrb><WindowsOrb /></StartOrb>
      <Grip $margin="0 0 0 4px" />
      <PinnedSlot><ExplorerIcon /></PinnedSlot>
      <TaskButtons>
        {taskIcons.map(Icon => (
          <TaskButton key={Icon.name}><Icon /></TaskButton>
        ))}
      </TaskButtons>
      <Tray>
        <Grip $margin="0 7px 0 0" />
        <TraySlot $w={21}>JP</TraySlot>
        <TraySlot $w={21}><ImeLetter>A</ImeLetter></TraySlot>
        <TraySlot $w={21}><WrenchIcon /></TraySlot>
        <TraySlot $w={21}><BallIcon /></TraySlot>
        <TraySlot $w={23}><HelpIcon /></TraySlot>
        <ImeBlock>
          CAPS ⧉
          <br />
          KANA ▾
        </ImeBlock>
        <TraySlot $w={26}><UpArrowIcon /></TraySlot>
        <TraySlot $w={24}><SafeRemoveIcon /></TraySlot>
        <TraySlot $w={24}><SpeakerIcon /></TraySlot>
        <TraySlot $w={24}><NetworkIcon /></TraySlot>
        <TraySlot $w={24}><FlagIcon /></TraySlot>
        <Clock>
          16:34
          <br />
          2017/01/24
        </Clock>
        <ShowDesktop />
      </Tray>
    </Taskbar>
  );
}

export default function App() {
  return (
    <Screen>
      <GlobalStyle />
      <BrowserChrome />
      <Viewport>
        <Checkout />
        <ScrollBar>
          <ScrollArrow />
          <ScrollThumb><ScrollGrip /></ScrollThumb>
          <ScrollTrack />
          <ScrollArrow $down />
        </ScrollBar>
      </Viewport>
      <WindowsTaskbar />
    </Screen>
  );
}
